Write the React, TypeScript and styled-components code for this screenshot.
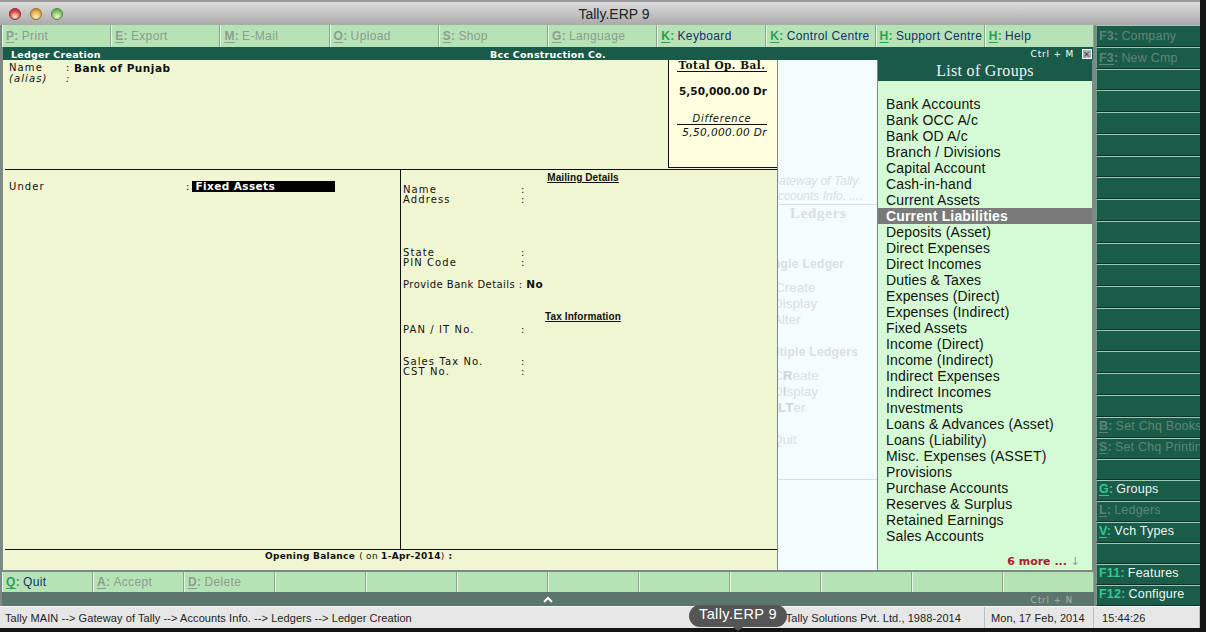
import styled, { createGlobalStyle } from "styled-components";

const GlobalStyle = createGlobalStyle`
    html, body {
        margin: 0;
        padding: 0;
        background: #141414;
        overflow: hidden;
    }
`

const Page = styled.div`
    width: 1206px;
    height: 632px;
    background: #141414;
    font-family: "Liberation Sans", Arial, sans-serif;
    overflow: hidden;
    position: relative;
`

const Window = styled.div`
    width: 1200px;
    height: 628px;
    display: flex;
    flex-direction: column;
    background: #7b8a84;
`

const TitleBar = styled.div`
    height: 23px;
    flex: none;
    display: flex;
    align-items: center;
    padding-left: 9px;
    gap: 9px;
    border-top: 2px solid #9a9a9a;
    background: linear-gradient(#dcdcdc, #aaaaaa);
`

const Light = styled.span<{ $color: string; $edge: string }>`
    width: 12px;
    height: 12px;
    border-radius: 50%;
    box-sizing: border-box;
    border: 1px solid ${p => p.$edge};
    background: radial-gradient(circle at 50% 75%, #f4f4d8 0, ${p => p.$color} 60%, ${p => p.$edge} 100%);
`

const Title = styled.div`
    flex: 1;
    margin-right: 44px;
    text-align: center;
    font-size: 14px;
    color: #222;
`

const Body = styled.div`
    flex: 1;
    display: flex;
    min-height: 0;
`

const Main = styled.div`
    width: 1094px;
    display: flex;
    flex-direction: column;
    padding-left: 2px;
    box-sizing: border-box;
`

const TopMenu = styled.div`
    height: 22px;
    flex: none;
    display: grid;
    grid-template-columns: repeat(10, 109.2px);
    background: #b6e3b6;
`

const BottomMenu = styled.div`
    height: 20px;
    flex: none;
    margin-top: 2px;
    display: grid;
    grid-template-columns: repeat(12, 91px);
    background: #b6e3b6;
`

const MenuItem = styled.div`
    display: flex;
    align-items: center;
    padding-left: 3px;
    font-size: 12px;
    letter-spacing: 0.35px;
    white-space: nowrap;
    overflow: hidden;
    border-left: 1px solid #e4f5e4;
    border-right: 1px solid #8aa98c;
    box-sizing: border-box;
`

const Key = styled.span<{ $off?: boolean }>`
    font-weight: 700;
    margin-right: 3px;
    color: ${p => (p.$off ? "#8c9c8e" : "#2c9e58")};
    & u {
        text-underline-offset: 2px;
    }
`

const MenuText = styled.span<{ $off?: boolean }>`
    color: ${p => (p.$off ? "#8c9c8e" : "#12306a")};
`

const HeaderBar = styled.div`
    height: 13px;
    flex: none;
    margin-left: 1px;
    margin-right: 1px;
    display: grid;
    grid-template-columns: 1fr auto 1fr;
    align-items: center;
    padding: 1px 1px 0 1px;
    box-sizing: border-box;
    background: #1a5a48;
    color: #fff;
    font: 700 9.5px "DejaVu Sans", sans-serif;
    letter-spacing: 0.25px;
`

const HeaderLeft = styled.span`
    padding-left: 7px;
`

const HeaderRight = styled.div`
    display: flex;
    justify-content: flex-end;
    align-items: center;
    gap: 8px;
    font-weight: 400;
    font-size: 9px;
    letter-spacing: 0.8px;
`

const CloseBox = styled.span`
    width: 10px;
    height: 10px;
    display: flex;
    align-items: center;
    justify-content: center;
    background: #b0b0b0;
    border: 1px solid #fff;
    box-sizing: border-box;
    color: #333;
    font-size: 9px;
    line-height: 1;
`

const Content = styled.div`
    flex: 1;
    display: flex;
    min-height: 0;
    margin-left: 1px;
    margin-right: 2px;
`

const Form = styled.div`
    width: 774px;
    flex: none;
    display: flex;
    flex-direction: column;
    background: #f0f5d2;
    color: #111;
    font: 10px "DejaVu Sans", sans-serif;
    letter-spacing: 1.1px;
`

const FormTop = styled.div`
    height: 108px;
    flex: none;
    display: flex;
    margin-bottom: 1px;
    padding-left: 6px;
`

const NameBlock = styled.div`
    flex: 1;
    padding-top: 2px;
`

const NameRow = styled.div<{ $italic?: boolean }>`
    display: grid;
    grid-template-columns: 57px 8px 1fr;
    height: ${p => (p.$italic ? "10px" : "12px")};
    line-height: ${p => (p.$italic ? "10px" : "12px")};
    font-style: ${p => (p.$italic ? "italic" : "normal")};
`

const Strong = styled.b`
    font-size: 10.5px;
    letter-spacing: 0.5px;
`

const BalanceBox = styled.div`
    width: 109px;
    flex: none;
    box-sizing: border-box;
    padding: 0 10px 0 8px;
    background: #ffffe0;
    border-left: 1px solid #111;
    border-bottom: 1px solid #111;
    text-align: right;
    white-space: nowrap;
`

const BalanceTitle = styled.div`
    font: 700 10.5px "DejaVu Serif", serif;
    letter-spacing: 0.5px;
    line-height: 11px;
    border-bottom: 1px solid #111;
    text-align: center;
`

const BalanceValue = styled.div`
    margin-top: 12px;
    line-height: 14px;
    font-weight: 700;
    font-size: 10.5px;
    letter-spacing: 0;
`

const DiffTitle = styled.div`
    margin-top: 15px;
    line-height: 11px;
    font-style: italic;
    text-align: center;
    letter-spacing: 0.7px;
    border-bottom: 1px solid #111;
`

const DiffValue = styled.div`
    line-height: 15px;
    font-style: italic;
    font-size: 10.5px;
    letter-spacing: 0.4px;
`

const FormMiddle = styled.div`
    flex: 1;
    display: flex;
    min-height: 0;
    margin-left: 2px;
    border-top: 1px solid #111;
    border-bottom: 1px solid #111;
`

const UnderCell = styled.div`
    width: 396px;
    flex: none;
    box-sizing: border-box;
    border-right: 1px solid #111;
    padding: 11px 0 0 4px;
    display: flex;
    align-items: flex-start;
`

const UnderLabel = styled.span`
    width: 177px;
    line-height: 11px;
`

const UnderColon = styled.span`
    line-height: 11px;
`

const FieldInput = styled.b`
    width: 143px;
    height: 11px;
    margin-left: 2px;
    padding-left: 3px;
    box-sizing: border-box;
    background: #000;
    color: #fff;
    font-size: 10.5px;
    letter-spacing: 0.4px;
    line-height: 11px;
`

const DetailsCell = styled.div`
    flex: 1;
    padding-left: 2px;
`

const SectionTitle = styled.div<{ $top?: number }>`
    height: 14px;
    margin-top: ${p => p.$top || 0}px;
    width: 360px;
    text-align: center;
    font: 700 10px/14px "Liberation Sans", sans-serif;
    letter-spacing: 0.1px;
    & span {
        text-decoration: underline;
    }
`

const DetailRow = styled.div<{ $top?: number; $tight?: boolean }>`
    display: grid;
    grid-template-columns: 118px 1fr;
    height: 10px;
    line-height: 10px;
    margin-top: ${p => p.$top || 0}px;
    white-space: nowrap;
    letter-spacing: ${p => (p.$tight ? "0.45px" : "inherit")};
`

const OpeningRow = styled.div`
    height: 20px;
    flex: none;
    display: flex;
    align-items: flex-start;
    padding: 1px 0 0 262px;
    box-sizing: border-box;
    gap: 4px;
    font-size: 9px;
    line-height: 10px;
    letter-spacing: 0.3px;
`

const Gateway = styled.div`
    width: 101px;
    flex: none;
    box-sizing: border-box;
    border-left: 1px solid #7b8a84;
    border-right: 1px solid #7b8a84;
    background: #f3fcff;
    color: #dadfe0;
    overflow: hidden;
    white-space: nowrap;
    font-size: 12px;
    display: flex;
    flex-direction: column;
`

const GatewayTop = styled.div`
    margin-top: 114px;
    margin-left: -8px;
    font-style: italic;
    line-height: 15px;
`

const GatewayRule = styled.div<{ $top?: number }>`
    height: 1px;
    flex: none;
    background: #d8dfe0;
    margin-top: ${p => p.$top || 0}px;
`

const GatewayTitle = styled.div`
    font: 700 15px/17px "Liberation Serif", serif;
    letter-spacing: 0.7px;
    padding-left: 12px;
`

const GatewayHead = styled.div<{ $top: number; $left: number }>`
    font-weight: 700;
    font-size: 12px;
    letter-spacing: 0.3px;
    line-height: 14px;
    margin-top: ${p => p.$top}px;
    margin-left: ${p => p.$left}px;
`

const GatewayItem = styled.div<{ $top?: number; $left?: number }>`
    font-size: 13.5px;
    line-height: 16px;
    margin-top: ${p => p.$top || 0}px;
    margin-left: ${p => p.$left || 0}px;
    & b {
        color: #cfd5d6;
    }
`

const GroupPanel = styled.div`
    width: 214px;
    flex: none;
    display: flex;
    flex-direction: column;
    background: #d4fbd4;
`

const GroupHeader = styled.div`
    height: 21px;
    flex: none;
    text-align: center;
    background: #1a5a48;
    color: #f2f2f2;
    font: 16px/21px "Liberation Serif", serif;
    letter-spacing: 0.3px;
`

const GroupList = styled.div`
    flex: 1;
    padding-top: 15px;
    display: flex;
    flex-direction: column;
`

const GroupRow = styled.div<{ $active?: boolean }>`
    height: 16px;
    line-height: 16px;
    flex: none;
    padding-left: 8px;
    font-size: 14px;
    letter-spacing: 0.15px;
    font-weight: ${p => (p.$active ? 700 : 400)};
    color: ${p => (p.$active ? "#fff" : "#111")};
    background: ${p => (p.$active ? "#7a7a7a" : "transparent")};
`

const MoreRow = styled.div`
    margin-top: auto;
    height: 17px;
    padding-right: 12px;
    text-align: right;
    color: #a81c30;
    font: 700 11px/17px "DejaVu Sans", sans-serif;
    & span {
        color: #999;
        font-weight: 400;
    }
`

const BottomStrip = styled.div`
    height: 14px;
    flex: none;
    display: grid;
    grid-template-columns: 1fr auto 1fr;
    align-items: center;
    background: #5c756d;
    color: #a8b4ae;
    font: 9px "DejaVu Sans", sans-serif;
    letter-spacing: 0.8px;
`

const StripRight = styled.div`
    text-align: right;
    padding: 2px 21px 0 0;
`

const Sidebar = styled.div`
    flex: 1;
    margin-left: 2px;
    display: grid;
    grid-template-rows: repeat(18, 21.75px) repeat(9, 21px);
`

const SideButton = styled.div`
    display: flex;
    align-items: center;
    padding-left: 2px;
    box-sizing: border-box;
    background: #1a5c48;
    border-top: 1px solid #9fc9b8;
    border-left: 1px solid #6f9a8a;
    border-bottom: 1px solid #0c3327;
    font-size: 12.5px;
    letter-spacing: 0.2px;
    white-space: nowrap;
    overflow: hidden;
    &:nth-child(n + 19) {
        padding-bottom: 3px;
    }
`

const SideKey = styled.span<{ $off?: boolean }>`
    font-weight: 700;
    margin-right: 3px;
    color: ${p => (p.$off ? "#5d8576" : "#35c890")};
    & u {
        text-underline-offset: 2px;
    }
`

const SideText = styled.span<{ $off?: boolean }>`
    color: ${p => (p.$off ? "#5d8576" : "#eef6f2")};
`

const StatusBar = styled.div`
    height: 22px;
    flex: none;
    display: flex;
    align-items: center;
    background: #e6e6e6;
    border-top: 1px solid #fafafa;
    box-sizing: border-box;
    color: #222;
    font-size: 11px;
    letter-spacing: 0.08px;
`

const StatusMain = styled.div`
    width: 985px;
    flex: none;
    box-sizing: border-box;
    height: 100%;
    display: flex;
    align-items: center;
    justify-content: space-between;
    padding: 0 23px 0 5px;
    white-space: nowrap;
    border-right: 1px solid #bdbdbd;
`

const StatusCell = styled.div<{ $width: number; $pad: number }>`
    width: ${p => p.$width}px;
    flex: none;
    box-sizing: border-box;
    height: 100%;
    display: flex;
    align-items: center;
    padding-left: ${p => p.$pad}px;
    white-space: nowrap;
    border-right: 1px solid #bdbdbd;
`

const DockTip = styled.div`
    position: absolute;
    left: 689px;
    top: 605px;
    width: 98px;
    height: 22px;
    border-radius: 11px;
    background: #555;
    color: #fff;
    font-size: 14.5px;
    line-height: 19px;
    text-align: center;
    letter-spacing: 0.4px;
    &::after {
        content: "";
        position: absolute;
        left: 44px;
        top: 22px;
        border-left: 5px solid transparent;
        border-right: 5px solid transparent;
        border-top: 4px solid #555;
    }
`

const topItems = [
    { k: "P", t: "Print", off: true },
    { k: "E", t: "Export", off: true },
    { k: "M", t: "E-Mail", off: true },
    { k: "O", t: "Upload", off: true },
    { k: "S", t: "Shop", off: true },
    { k: "G", t: "Language", off: true },
    { k: "K", t: "Keyboard" },
    { k: "K", t: "Control Centre" },
    { k: "H", t: "Support Centre" },
    { k: "H", t: "Help" },
]

const bottomItems = [
    { k: "Q", t: "Quit" },
    { k: "A", t: "Accept", off: true },
    { k: "D", t: "Delete", off: true },
    {}, {}, {}, {}, {}, {}, {}, {}, {},
]

const sideItems: { k?: string; t?: string; off?: boolean; plain?: boolean }[] = [
    { k: "F3", t: "Company", off: true, plain: true },
    { k: "F3", t: "New Cmp", off: true },
    ...Array.from({ length: 16 }, () => ({})),
    { k: "B", t: "Set Chq Books", off: true },
    { k: "S", t: "Set Chq Printing", off: true },
    {},
    { k: "G", t: "Groups" },
    { k: "L", t: "Ledgers", off: true },
    { k: "V", t: "Vch Types" },
    {},
    { k: "F11", t: "Features", plain: true },
    { k: "F12", t: "Configure", plain: true },
]

const groups = [
    "Bank Accounts", "Bank OCC A/c", "Bank OD A/c", "Branch / Divisions", "Capital Account",
    "Cash-in-hand", "Current Assets", "Current Liabilities", "Deposits (Asset)", "Direct Expenses",
    "Direct Incomes", "Duties & Taxes", "Expenses (Direct)", "Expenses (Indirect)", "Fixed Assets",
    "Income (Direct)", "Income (Indirect)", "Indirect Expenses", "Indirect Incomes", "Investments",
    "Loans & Advances (Asset)", "Loans (Liability)", "Misc. Expenses (ASSET)", "Provisions",
    "Purchase Accounts", "Reserves & Surplus", "Retained Earnings", "Sales Accounts",
]

const App = () => {
    return (
        <Page>
            <GlobalStyle />
            <Window>
                <TitleBar>
                    <Light $color="#e0404c" $edge="#8e2a30" />
                    <Light $color="#e8a83c" $edge="#9a7228" />
                    <Light $color="#7cc060" $edge="#4e8a3e" />
                    <Title>Tally.ERP 9</Title>
                </TitleBar>
                <Body>
                    <Main>
                        <TopMenu>
                            {topItems.map(item => (
                                <MenuItem key={item.t}>
                                    <Key $off={item.off}><u>{item.k}</u>:</Key>
                                    <MenuText $off={item.off}>{item.t}</MenuText>
                                </MenuItem>
                            ))}
                        </TopMenu>
                        <HeaderBar>
                            <HeaderLeft>Ledger Creation</HeaderLeft>
                            <span>Bcc Construction Co.</span>
                            <HeaderRight>
                                <span>Ctrl + M</span>
                                <CloseBox>×</CloseBox>
                            </HeaderRight>
                        </HeaderBar>
                        <Content>
                            <Form>
                                <FormTop>
                                    <NameBlock>
                                        <NameRow>
                                            <span>Name</span>
                                            <span>:</span>
                                            <Strong>Bank of Punjab</Strong>
                                        </NameRow>
                                        <NameRow $italic>
                                            <span>(alias)</span>
                                            <span>:</span>
                                        </NameRow>
                                    </NameBlock>
                                    <BalanceBox>
                                        <BalanceTitle>Total Op. Bal.</BalanceTitle>
                                        <BalanceValue>5,50,000.00 Dr</BalanceValue>
                                        <DiffTitle>Difference</DiffTitle>
                                        <DiffValue>5,50,000.00 Dr</DiffValue>
                                    </BalanceBox>
                                </FormTop>
                                <FormMiddle>
                                    <UnderCell>
                                        <UnderLabel>Under</UnderLabel>
                                        <UnderColon>:</UnderColon>
                                        <FieldInput>Fixed Assets</FieldInput>
                                    </UnderCell>
                                    <DetailsCell>
                                        <SectionTitle $top={1}><span>Mailing Details</span></SectionTitle>
                                        <DetailRow><span>Name</span><span>:</span></DetailRow>
                                        <DetailRow><span>Address</span><span>:</span></DetailRow>
                                        <DetailRow $top={43}><span>State</span><span>:</span></DetailRow>
                                        <DetailRow><span>PIN Code</span><span>:</span></DetailRow>
                                        <DetailRow $top={11} $tight>
                                            <span>Provide Bank Details : <Strong>No</Strong></span>
                                        </DetailRow>
                                        <SectionTitle $top={21}><span>Tax Information</span></SectionTitle>
                                        <DetailRow $top={1}><span>PAN / IT No.</span><span>:</span></DetailRow>
                                        <DetailRow $top={22}><span>Sales Tax No.</span><span>:</span></DetailRow>
                                        <DetailRow><span>CST No.</span><span>:</span></DetailRow>
                                    </DetailsCell>
                                </FormMiddle>
                                <OpeningRow>
                                    <b>Opening Balance</b>
                                    <span>( on <b>1-Apr-2014</b>)</span>
                                    <b>:</b>
                                </OpeningRow>
                            </Form>
                            <Gateway>
                                <GatewayTop>
                                    <div>Gateway of Tally</div>
                                    <div>Accounts Info. ....</div>
                                </GatewayTop>
                                <GatewayRule />
                                <GatewayTitle>Ledgers</GatewayTitle>
                                <GatewayHead $top={35} $left={-17}>Single Ledger</GatewayHead>
                                <GatewayItem $top={9} $left={-3}>Create</GatewayItem>
                                <GatewayItem $left={-5}>Display</GatewayItem>
                                <GatewayItem $left={-5}>Alter</GatewayItem>
                                <GatewayHead $top={17} $left={-20}>Multiple Ledgers</GatewayHead>
                                <GatewayItem $top={9} $left={-5}>C<b>R</b>eate</GatewayItem>
                                <GatewayItem $left={-5}>D<b>I</b>splay</GatewayItem>
                                <GatewayItem $left={-9}>A<b>LT</b>er</GatewayItem>
                                <GatewayItem $top={16} $left={-6}>Quit</GatewayItem>
                                <GatewayRule $top={31} />
                            </Gateway>
                            <GroupPanel>
                                <GroupHeader>List of Groups</GroupHeader>
                                <GroupList>
                                    {groups.map(name => (
                                        <GroupRow key={name} $active={name === "Current Liabilities"}>{name}</GroupRow>
                                    ))}
                                    <MoreRow>6 more ... <span>↓</span></MoreRow>
                                </GroupList>
                            </GroupPanel>
                        </Content>
                        <BottomMenu>
                            {bottomItems.map((item, i) => (
                                <MenuItem key={i}>
                                    {item.k && <Key $off={item.off}><u>{item.k}</u>:</Key>}
                                    {item.t && <MenuText $off={item.off}>{item.t}</MenuText>}
                                </MenuItem>
                            ))}
                        </BottomMenu>
                        <BottomStrip>
                            <span />
                            <svg width="10" height="7" viewBox="0 0 10 7">
                                <path d="M1 6 L5 2 L9 6" fill="none" stroke="#fff" strokeWidth="2" />
                            </svg>
                            <StripRight>Ctrl + N</StripRight>
                        </BottomStrip>
                    </Main>
                    <Sidebar>
                        {sideItems.map((item, i) => (
                            <SideButton key={i}>
                                {item.k && (
                                    <SideKey $off={item.off}>
                                        {item.plain ? item.k : <u>{item.k}</u>}:
                                    </SideKey>
                                )}
                                {item.t && <SideText $off={item.off}>{item.t}</SideText>}
                            </SideButton>
                        ))}
                    </Sidebar>
                </Body>
                <StatusBar>
                    <StatusMain>
                        <span>Tally MAIN --&gt; Gateway of Tally --&gt; Accounts Info. --&gt; Ledgers --&gt; Ledger Creation</span>
                        <span>(c) Tally Solutions Pvt. Ltd., 1988-2014</span>
                    </StatusMain>
                    <StatusCell $width={109} $pad={6}>Mon, 17 Feb, 2014</StatusCell>
                    <StatusCell $width={106} $pad={8}>15:44:26</StatusCell>
                </StatusBar>
            </Window>
            <DockTip>Tally.ERP 9</DockTip>
        </Page>
    )
}

export default App
